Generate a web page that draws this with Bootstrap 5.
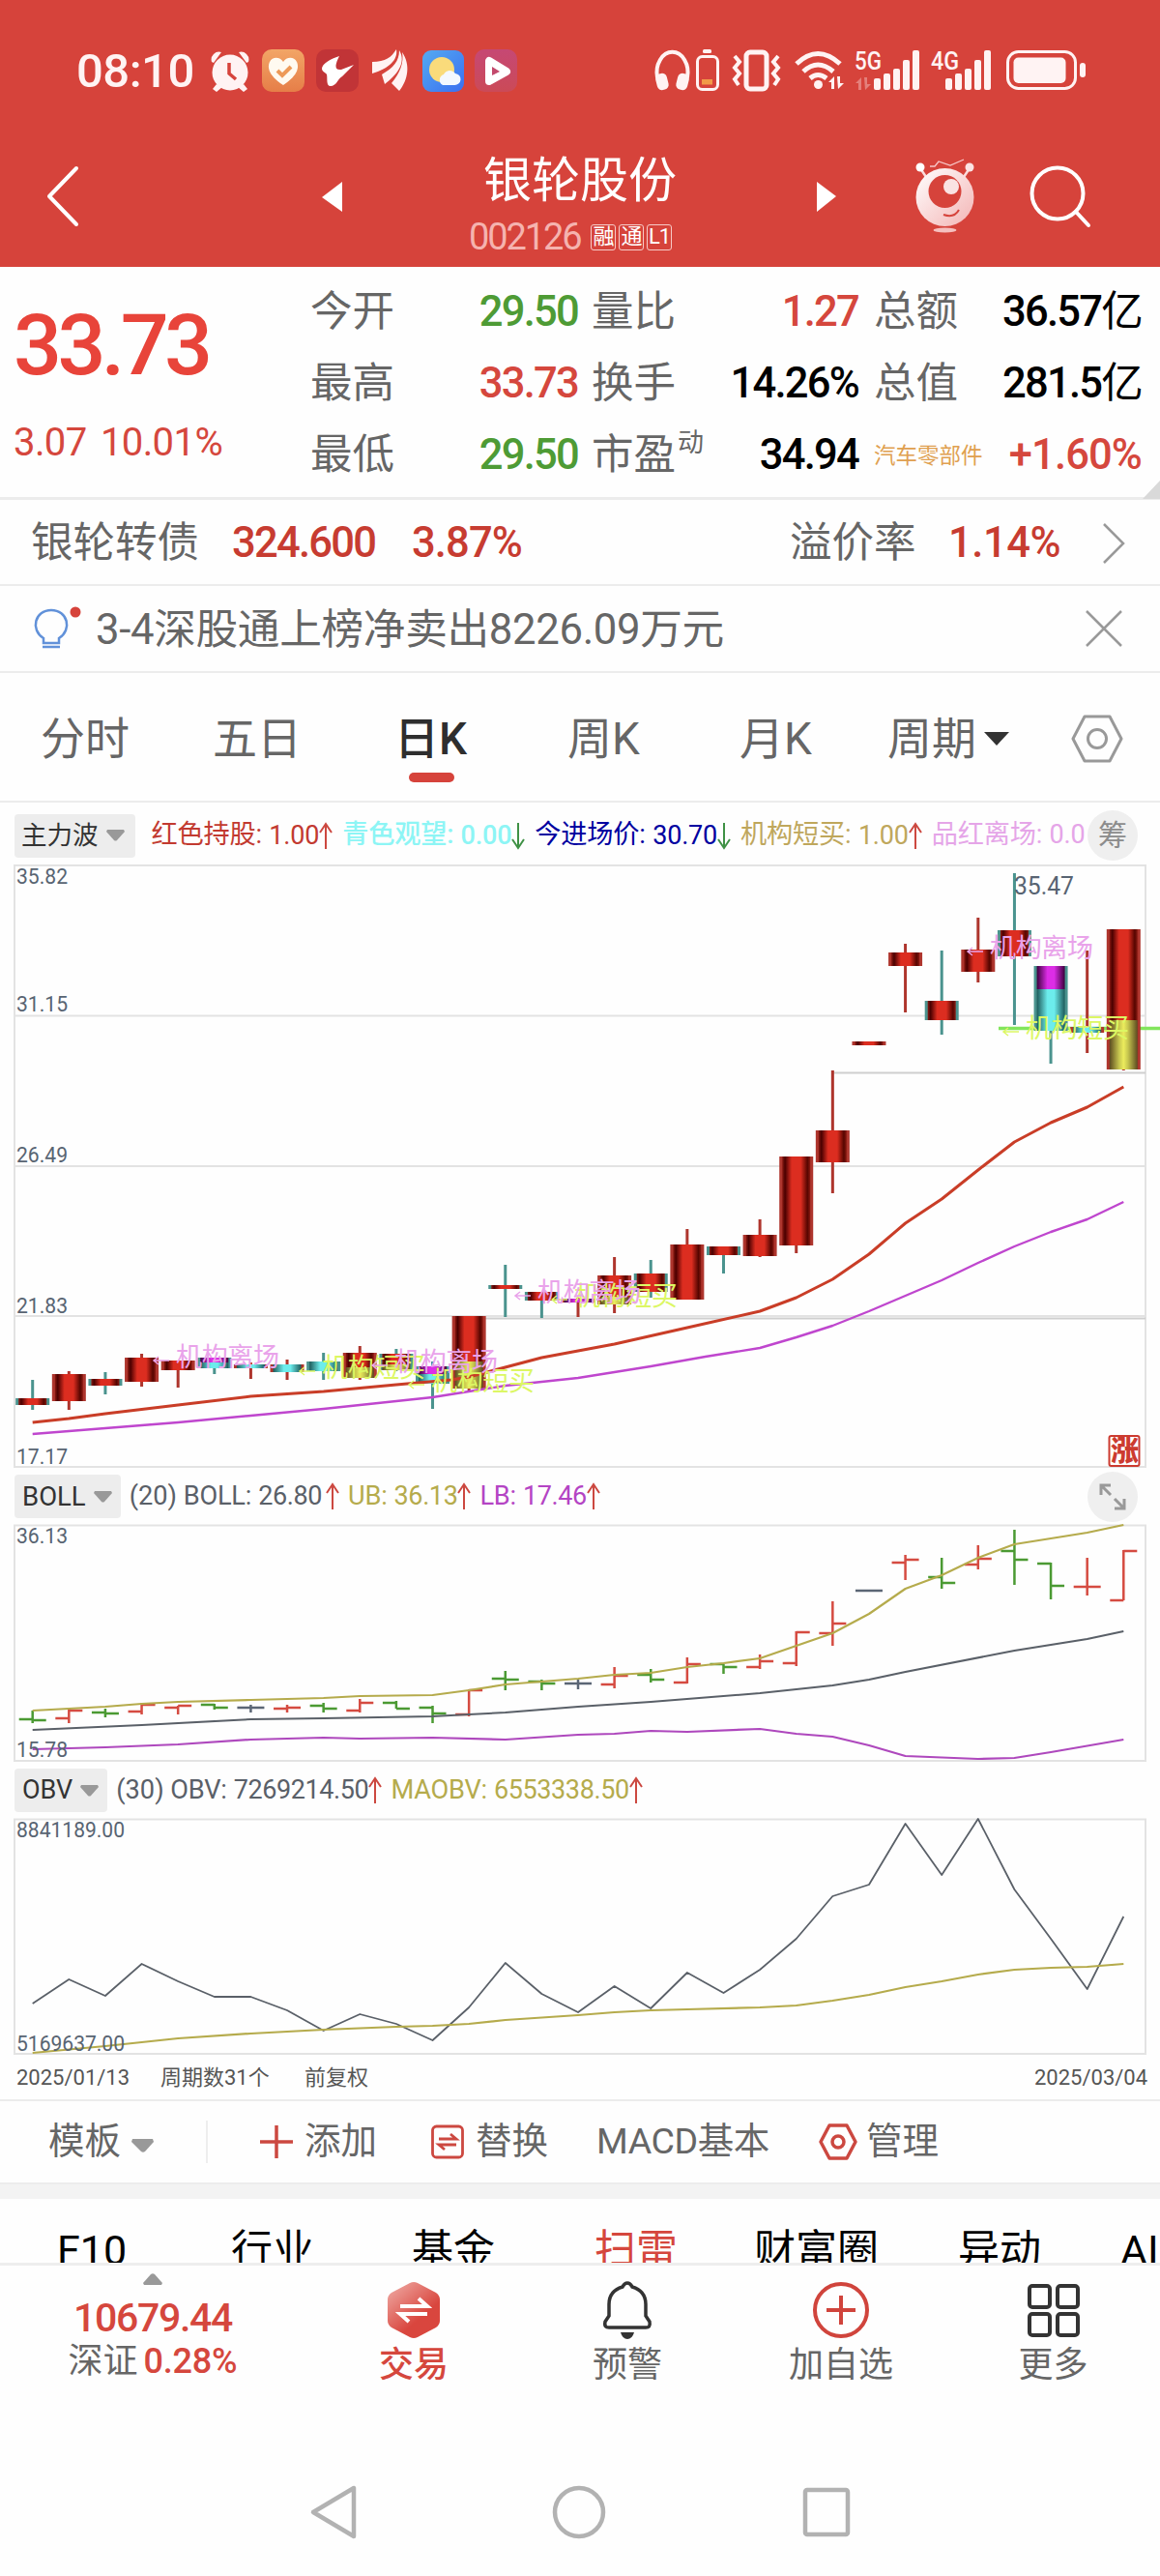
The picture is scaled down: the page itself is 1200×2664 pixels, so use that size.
<!DOCTYPE html>
<html lang="zh-CN">
<head>
<meta charset="utf-8">
<meta name="viewport" content="width=device-width, initial-scale=1">
<title>银轮股份 002126</title>
<link rel="stylesheet" href="https://cdn.jsdelivr.net/npm/bootstrap@5.3.0/dist/css/bootstrap.min.css">
<script src="https://cdn.jsdelivr.net/npm/bootstrap@5.3.0/dist/js/bootstrap.bundle.min.js"></script>
<style>
  :root{--red:#d6433b;--up:#d5473d;--down:#4e9b35;--ink:#666;--line:#ececec}
  html,body{background:#fefefe}
  body{font-family:Roboto,"Noto Sans CJK SC",sans-serif;width:1200px;height:2664px;overflow:hidden;color:var(--ink);line-height:1}
  svg{display:block;overflow:visible;flex:none}
  .n{letter-spacing:-.04em;font-weight:500;white-space:nowrap}
  .up{color:var(--up)} .down{color:var(--down)} .blk{color:#000}
  .strip{display:grid;align-items:center;white-space:nowrap}
  .topbar{background:var(--red);height:276px;color:#fff}
  .status{height:140px;padding:6px 76px 0 79px}
  .clock{font-size:49px;letter-spacing:-.5px;color:#fff3f3;margin-right:19px;font-weight:500;width:120px}
  .head{height:136px;grid-template-columns:48px 285px 152px 360px 102px 118px 1fr;padding-bottom:10px}
  .title{font-size:50px;line-height:56px;padding-left:15px}
  .codeline{margin-top:12px}
  .code{font-size:38px;color:#f5b3af;letter-spacing:-2.1px;line-height:36px;width:126px}
  .tagbox{width:26px;height:27px;border:1px solid #f7c9c6;border-radius:3px;font-size:22px;color:#fff;letter-spacing:-1px}
  .quote{height:241px;border-bottom:3px solid var(--line);display:grid;grid-template-columns:14px 307px 277px 14px 276px 16px 277px;grid-template-rows:repeat(3,74px);padding-top:10px;font-size:43.5px;align-items:center;position:relative;white-space:nowrap}
  .lastpx{grid-area:1/2/4/3;align-self:start;color:#e8443a}
  .lastpx .big{font-size:88px;letter-spacing:-4.6px;line-height:88px;margin-top:27px;font-weight:500}
  .lastpx .chg{font-size:40px;color:var(--up);margin-top:37px;word-spacing:5px;letter-spacing:-.6px;font-weight:400}
  .g1{grid-column:3}.g2{grid-column:5}.g3{grid-column:7}
  .sup{font-size:27px;position:relative;top:-18px;margin-left:2px}
  .sector{font-size:22.5px;color:#e0a050}
  .corner{position:absolute;right:0;bottom:-2px}
  .bond{height:89px;border-bottom:2px solid var(--line);grid-template-columns:32px 208px 186px 391px 164px 160px 1fr;font-size:43.5px;padding-top:2px}
  .bond .up{color:#c73c31}
  .news{height:90px;border-bottom:2px solid var(--line);grid-template-columns:35px 64px 1024px 1fr;font-size:43.7px}
  .news span{padding-top:4px;letter-spacing:-.35px}
  .period{height:134px;border-bottom:2px solid #ececec;grid-template-columns:42px 178px 188px 179px 178px 153px 100px 90px 1fr;font-size:46px;padding-top:4px}
  .period .on{color:#2e2e2e;font-weight:500;position:relative}
  .on i{position:absolute;left:15px;top:58px;width:47px;height:10px;border-radius:5px;background:var(--red)}
  .legend{height:64px;padding:4px 0 0 15px;font-size:27.2px}
  .legend.low{height:59px;padding-top:0}
  .pick{background:#ededed;border-radius:4px;height:45px;color:#333;padding:0 11px 0 7px;gap:8px;margin-right:17px;font-size:26.5px}
  .pick.en{font-size:27.5px;padding:0 9px 0 8px;margin-right:9px}
  .pick.obv{font-size:27px}
  .per{width:56px;color:#5a6068}
  .legend .it{margin-right:10px;white-space:nowrap;letter-spacing:-.2px}
  .legend .num{font-size:27px;letter-spacing:-.2px;margin-left:7.5px}
  .low .it{margin-right:9px}
  .low .num{letter-spacing:-.4px;margin-left:7px}
  .dot{width:52px;height:52px;border-radius:50%;background:#efefef;color:#8c8c8c;font-size:30px}
  .dates{height:46px;font-size:22px;grid-template-columns:17px 149px 149px 755px 1fr;color:#555;padding-top:2px}
  .tools{height:86px;border-top:2px solid var(--line);grid-template-columns:50px 86px 77px 56px 46px 131px 46px 125px 230px 49px 1fr;font-size:37.5px}
  .band{height:17px;background:#f3f3f3;border-top:2px solid #ececec}
  .more{height:66px;overflow:hidden;grid-template-columns:59px 180px 187px 189px 165px 211px 168px 1fr;font-size:43px;color:#000;align-items:start;padding-top:32px}
  .dock{height:140px;border-top:3px solid #eee;grid-template-columns:316px 224px 218px 224px 217px;align-items:start;font-size:36px}
  .dock .cell{display:flex;flex-direction:column;align-items:center;padding-top:16px}
  .dock .cell svg{height:60px;margin-bottom:9px}
  .keys{height:150px}
  text{font-family:Roboto,"Noto Sans CJK SC",sans-serif}
</style>
</head>
<body>
<header class="topbar">
  <div class="status d-flex align-items-center">
    <span class="clock">08:10</span>
    <div class="d-flex align-items-center flex-grow-1">
      <svg width="40" height="44" viewBox="0 0 40 44"><g fill="#fff3f3"><circle cx="20" cy="24" r="18.5"/><path d="M1 13A8 8 0 0 1 11 3L3 14zM39 13A8 8 0 0 0 29 3l8 11z"/><path d="M6 36l-4 5 4 3 6-5zM34 36l4 5-4 3-6-5z"/></g><path d="M19 14v11l7 6" fill="none" stroke="#d6433b" stroke-width="3.5"/></svg>
      <svg style="margin-left:13px" width="44" height="44" viewBox="0 0 44 44"><defs><linearGradient id="ho" x2="0" y2="1"><stop stop-color="#f2a566"/><stop offset="1" stop-color="#e67e48"/></linearGradient></defs><rect width="44" height="44" rx="10" fill="url(#ho)"/><path d="M22 37C5 26 6 17 8 13c3-6 11-5 14 0 3-5 11-6 14 0 2 4 3 13-14 24z" fill="#fffaf0"/><path d="M16 22l5 5 9-9" fill="none" stroke="#ed9a58" stroke-width="4"/></svg>
      <svg class="ms-2" width="48" height="44" viewBox="-4 0 48 44"><rect width="44" height="44" rx="10" fill="#c13437"/><path d="M24 7c-9 3-18 8-18 13 0 3 4 4 5 6 1 4-1 12 4 12 6 0 7-7 12-10L39 16 26 21c-8 1-6-6-2-14z" fill="#fff"/></svg>
      <svg style="margin-left:13px" width="40" height="44" viewBox="0 0 40 44"><g fill="#fff3f3"><path d="M1 13c14 0 20-5 25-13 2 11-8 20-25 25z"/><path d="M11 26C23 19 29 12 29 1c8 13-3 26-15 35z"/><path d="M21 35C30 24 34 14 32 3c9 13 6 29-3 40z"/></g></svg>
      <svg style="margin-left:13px" width="43" height="44" viewBox="0 0 43 44"><defs><linearGradient id="wb" x2="1" y2="1"><stop stop-color="#54aaf2"/><stop offset="1" stop-color="#3b6ff0"/></linearGradient></defs><rect y="1" width="43" height="43" rx="9" fill="url(#wb)"/><circle cx="20" cy="21" r="13" fill="#fadb7b"/><path d="M21 37a6 6 0 0 1 1-11 7 7 0 0 1 12-1 6 6 0 0 1-1 12z" fill="#f4f8ff"/></svg>
      <svg style="margin-left:11px" width="44" height="44" viewBox="0 0 44 44"><defs><linearGradient id="pp" x2="0" y2="1"><stop stop-color="#c64874"/><stop offset="1" stop-color="#cb4a57"/></linearGradient></defs><rect width="44" height="44" rx="10" fill="url(#pp)"/><path d="M15 12v21l18-10z" fill="none" stroke="#fff" stroke-width="8" stroke-linejoin="round"/><path d="M18 18v9l8-4z" fill="#c34a6d"/></svg>
    </div>
    <svg width="447" height="44" viewBox="677 52 447 44" fill="#fff3f3">
      <path d="M680 81a16 21 0 1 1 31 0" fill="none" stroke="#fff3f3" stroke-width="4"/><rect x="679" y="77" width="12" height="17" rx="5" transform="rotate(-14 685 86)"/><rect x="700" y="77" width="12" height="17" rx="5" transform="rotate(14 706 86)"/>
      <rect x="727" y="52" width="9" height="4" rx="1.5"/><rect x="721.5" y="59.500" width="21" height="34" rx="5" fill="none" stroke="#fff3f3" stroke-width="3"/><rect x="726" y="83" width="11" height="5.500" fill="#f19a48"/>
      <rect x="772" y="55" width="21" height="38" rx="4" fill="none" stroke="#fff3f3" stroke-width="5"/><path d="M760 59l5 6-5 6 5 6-5 6 4 6M805 59l-5 6 5 6-5 6 5 6-4 6" fill="none" stroke="#fff3f3" stroke-width="4"/>
      <g fill="none" stroke="#fff3f3" stroke-width="5"><path d="M824 67q22-21 45 0"/><path d="M831 75q15-14 31 0"/><path d="M838 82q8-7 17 0"/></g><circle cx="846.500" cy="88.500" r="4.500"/><path d="M857 86l6-6v13h-3v-7zM866 80h3v7h4l-6 6z"/>
      <text x="884" y="73" font-size="26" font-weight="500" textLength="28" lengthAdjust="spacingAndGlyphs">5G</text>
      <path d="M885 87l6-6v13h-3v-7zM894 81h3v7h4l-6 6z" opacity=".35"/>
      <g id="sig"><rect x="904" y="82" width="7" height="12" rx="2"/><rect x="914" y="77" width="7" height="17" rx="2"/><rect x="924" y="72" width="7" height="22" rx="2"/><rect x="934" y="63" width="7" height="31" rx="2"/><rect x="944" y="53" width="7" height="41" rx="2"/></g>
      <text x="963" y="73" font-size="26" font-weight="500" textLength="29" lengthAdjust="spacingAndGlyphs">4G</text>
      <use href="#sig" x="74"/>
      <rect x="1042.500" y="54.500" width="70" height="38" rx="11" fill="none" stroke="#fff3f3" stroke-width="3"/><rect x="1048.500" y="60.500" width="54" height="26.500" rx="5"/><rect x="1117" y="66" width="6" height="15" rx="3"/>
    </svg>
  </div>
  <nav class="head strip">
    <span></span>
    <svg width="34" height="62" viewBox="0 0 34 62"><path d="M31 2L3 31l28 29" fill="none" stroke="#fff" stroke-width="4" stroke-linecap="round" stroke-linejoin="round"/></svg>
    <svg width="21" height="31" viewBox="0 0 21 31"><path d="M21 0v31L0 16z" fill="#fff"/></svg>
    <div class="pt-3">
      <div class="title">银轮股份</div>
      <div class="codeline d-flex align-items-center"><span class="code">002126</span><span class="d-flex" style="gap:3px"><span class="tagbox d-flex align-items-center justify-content-center">融</span><span class="tagbox d-flex align-items-center justify-content-center">通</span><span class="tagbox d-flex align-items-center justify-content-center">L1</span></span></div>
    </div>
    <svg width="21" height="31" viewBox="0 0 21 31"><path d="M0 0v31l20-16z" fill="#fff"/></svg>
    <svg width="62" height="76" viewBox="0 0 62 76"><defs><linearGradient id="rb" x2="1" y2="1"><stop stop-color="#fff"/><stop offset="1" stop-color="#f3b4b4"/></linearGradient></defs><path d="M5 9l8 12M56 9l-8 12" stroke="#fbdcdc" stroke-width="2.500"/><path d="M15 7h5l4-5 12 4L50 0" fill="none" stroke="#f8c8c8" stroke-width="1.300"/><circle cx="5" cy="8" r="4.500" fill="#fff"/><circle cx="56" cy="8" r="4.500" fill="#fbe4e4"/><circle cx="30.500" cy="39" r="30" fill="url(#rb)"/><circle cx="30.500" cy="33" r="17" fill="#d6433b"/><circle cx="37" cy="28" r="8" fill="#fae3e3"/><path d="M29 57q11 4 16-5" fill="none" stroke="#d6433b" stroke-width="2"/><ellipse cx="30.500" cy="73" rx="12" ry="2.500" fill="#f5c0bf"/></svg>
    <svg width="64" height="64" viewBox="0 0 64 64" fill="none" stroke="#fff" stroke-width="4" stroke-linecap="round"><circle cx="29" cy="29" r="26.500"/><path d="M48 48l13 14"/></svg>
  </nav>
</header>

<section class="quote">
  <div class="lastpx"><div class="big">33.73</div><div class="chg">3.07 10.01%</div></div>
  <div class="g1 d-flex justify-content-between"><span>今开</span><span class="n down">29.50</span></div>
  <div class="g2 d-flex justify-content-between"><span>量比</span><span class="n up">1.27</span></div>
  <div class="g3 d-flex justify-content-between"><span>总额</span><span class="n blk">36.57<span class="fw-normal">亿</span></span></div>
  <div class="g1 d-flex justify-content-between"><span>最高</span><span class="n up">33.73</span></div>
  <div class="g2 d-flex justify-content-between"><span>换手</span><span class="n blk">14.26%</span></div>
  <div class="g3 d-flex justify-content-between"><span>总值</span><span class="n blk">281.5<span class="fw-normal">亿</span></span></div>
  <div class="g1 d-flex justify-content-between"><span>最低</span><span class="n down">29.50</span></div>
  <div class="g2 d-flex justify-content-between"><span>市盈<span class="sup">动</span></span><span class="n blk">34.94</span></div>
  <div class="g3 d-flex justify-content-between align-items-center"><span class="sector">汽车零部件</span><span class="n up" style="letter-spacing:-.02em">+1.60%</span></div>
  <svg class="corner" width="18" height="19"><path d="M18 0v19H0z" fill="#d9d9d9"/></svg>
</section>

<section class="bond strip">
  <span></span><span>银轮转债</span><span class="n up">324.600</span><span class="n up" style="letter-spacing:-.02em">3.87%</span><span>溢价率</span><span class="n up" style="letter-spacing:-.01em">1.14%</span>
  <svg width="22" height="42" viewBox="0 0 22 42"><path d="M1 1l20 20L1 41" fill="none" stroke="#999" stroke-width="2.500"/></svg>
</section>
<section class="news strip">
  <i></i>
  <svg width="50" height="46" viewBox="0 0 50 46" fill="none" stroke="#6191d9" stroke-width="2.500"><path d="M10 38v-5C-4 24 1 4 18 4s22 20 8 29v5zM9 42h18"/><circle cx="43" cy="6" r="5.500" fill="#d6433b" stroke="none"/></svg>
  <span>3-4深股通上榜净卖出8226.09万元</span>
  <svg width="38" height="38" viewBox="0 0 38 38"><path d="M1 1l36 36M37 1L1 37" stroke="#999" stroke-width="2.500"/></svg>
</section>
<nav class="period strip">
  <span></span><span>分时</span><span>五日</span><span class="on">日K<i></i></span><span>周K</span><span>月K</span><span>周期</span>
  <svg width="26" height="14"><path d="M0 0h26L13 14z" fill="#333"/></svg>
  <svg width="54" height="50" viewBox="0 0 54 50" fill="none" stroke="#999" stroke-width="3"><path d="M14 2h26l12 23-12 23H14L2 25z" stroke-linejoin="round"/><circle cx="27" cy="25" r="9.500"/></svg>
</nav>

<section>
  <div class="legend d-flex align-items-center">
    <div class="pick d-flex align-items-center">主力波<svg width="19" height="12"><path d="M1 0h17l1 2-8 9q-1.500 1-3 0L0 2z" fill="#999"/></svg></div>
    <span class="it d-flex align-items-center" style="color:#c23a30">红色持股:<span class="num">1.00</span><svg width="14" height="29" viewBox="0 0 14 29"><use href="#arr"/></svg></span>
    <span class="it d-flex align-items-center fw-medium" style="color:#8df5f5">青色观望:<span class="num">0.00</span><svg width="14" height="29" viewBox="0 0 14 29"><use href="#ard"/></svg></span>
    <span class="it d-flex align-items-center" style="color:#0000a0">今进场价:<span class="num">30.70</span><svg width="14" height="29" viewBox="0 0 14 29"><use href="#ard"/></svg></span>
    <span class="it d-flex align-items-center" style="color:#bfa75c">机构短买:<span class="num">1.00</span><svg width="14" height="29" viewBox="0 0 14 29"><use href="#arr"/></svg></span>
    <span class="it d-flex align-items-center me-0" style="color:#e5a5e8">品红离场:<span class="num">0.0</span></span>
    <span class="dot d-flex align-items-center justify-content-center ms-auto" style="margin-right:23px">筹</span>
  </div>
  <svg id="kline" width="1200" height="624" viewBox="0 894 1200 624">
    <defs>
      <g id="arr" fill="none" stroke="#cc4840" stroke-width="2"><path d="M7 28V2M1 11l6-9 6 9"/></g>
      <g id="ard" fill="none" stroke="#3f9145" stroke-width="2"><path d="M7 1v26M1 18l6 9 6-9"/></g>
      <linearGradient id="gr"><stop stop-color="#8a1a12"/><stop offset=".1" stop-color="#4a0000"/><stop offset=".34" stop-color="#dc2d20"/><stop offset=".66" stop-color="#dc2d20"/><stop offset=".9" stop-color="#560500"/><stop offset="1" stop-color="#8a1a12"/></linearGradient>
      <linearGradient id="gc"><stop stop-color="#1d5a5a"/><stop offset=".38" stop-color="#6cecec"/><stop offset=".62" stop-color="#6cecec"/><stop offset="1" stop-color="#1d5a5a"/></linearGradient>
      <linearGradient id="gm"><stop stop-color="#3c003c"/><stop offset=".38" stop-color="#dc2de6"/><stop offset=".62" stop-color="#dc2de6"/><stop offset="1" stop-color="#3c003c"/></linearGradient>
      <linearGradient id="gy"><stop stop-color="#5c4a20"/><stop offset=".35" stop-color="#c8c850"/><stop offset=".5" stop-color="#ecec5c"/><stop offset=".65" stop-color="#c8c850"/><stop offset="1" stop-color="#5c4a20"/></linearGradient>
    </defs>
    <g fill="none" stroke="#e3e3e3" stroke-width="2"><path d="M15 895H1185V1517H15zM15 1050.500H1185M15 1206H1185M15 1361H1185"/><path d="M862 1109.500H1185M488 1363.500H1185" stroke="#cfcfcf"/></g>
    <path d="M1033 1063.500H1200" stroke="#82e55c" stroke-width="3.500"/>
  </svg>
</section>

<section>
  <div class="legend low d-flex align-items-center">
    <div class="pick en d-flex align-items-center">BOLL<svg width="19" height="12"><path d="M1 0h17l1 2-8 9q-1.500 1-3 0L0 2z" fill="#999"/></svg></div>
    <span class="per">(20)</span>
    <span class="it d-flex align-items-center" style="color:#5a6068">BOLL:<span class="num">26.80</span><svg class="ms-1" width="14" height="29" viewBox="0 0 14 29"><use href="#arr"/></svg></span>
    <span class="it d-flex align-items-center" style="color:#b5ab4c">UB:<span class="num">36.13</span><svg width="14" height="29" viewBox="0 0 14 29"><use href="#arr"/></svg></span>
    <span class="it d-flex align-items-center" style="color:#b444c4">LB:<span class="num">17.46</span><svg width="14" height="29" viewBox="0 0 14 29"><use href="#arr"/></svg></span>
    <span class="dot d-flex align-items-center justify-content-center ms-auto" style="margin-right:23px"><svg width="28" height="28" viewBox="0 0 28 28" fill="none" stroke="#999" stroke-width="3"><path d="M12 12L2.500 2.500M2 12V2h10M16 16l9.500 9.500M26 16v10H16"/></svg></span>
  </div>
  <svg id="boll" width="1200" height="245" viewBox="0 1577 1200 245"><path d="M15 1577.500H1185V1821H15z" fill="none" stroke="#e3e3e3" stroke-width="2"/></svg>
</section>

<section>
  <div class="legend low d-flex align-items-center">
    <div class="pick en obv d-flex align-items-center">OBV<svg width="19" height="12"><path d="M1 0h17l1 2-8 9q-1.500 1-3 0L0 2z" fill="#999"/></svg></div>
    <span class="per">(30)</span>
    <span class="it d-flex align-items-center" style="color:#5a6068">OBV:<span class="num">7269214.50</span><svg width="14" height="29" viewBox="0 0 14 29"><use href="#arr"/></svg></span>
    <span class="it d-flex align-items-center" style="color:#b5ab4c">MAOBV:<span class="num">6553338.50</span><svg width="14" height="29" viewBox="0 0 14 29"><use href="#arr"/></svg></span>
  </div>
  <svg id="obv" width="1200" height="244" viewBox="0 1881 1200 244"><path d="M15 1881.500H1185V2124H15z" fill="none" stroke="#e3e3e3" stroke-width="2"/></svg>
  <div class="dates strip"><span></span><span>2025/01/13</span><span>周期数31个</span><span>前复权</span><span>2025/03/04</span></div>
</section>

<nav class="tools strip">
  <span></span><span>模板</span><svg style="margin-top:7px" width="23" height="14"><path d="M1 0h21l1 3-9 10q-2 1.500-4 0L0 3z" fill="#999"/></svg>
  <svg width="56" height="44"><path d="M1 0v44" stroke="#eee" stroke-width="2"/></svg>
  <svg width="34" height="34"><path d="M17 0v34M0 17h34" stroke="#cc4840" stroke-width="3.500"/></svg><span>添加</span>
  <svg width="34" height="36" viewBox="0 0 34 36" fill="none" stroke="#cc4840" stroke-width="2.800"><rect x="1.500" y="2" width="31" height="32" rx="4"/><path d="M8 15h18l-6-5M26 21H8l6 5"/></svg><span>替换</span><span style="letter-spacing:-.4px">MACD基本</span>
  <svg width="40" height="38" viewBox="0 0 40 38" fill="none" stroke="#cc4840" stroke-width="3.500"><path d="M11 2h18l9 17-9 17H11L2 19z" stroke-linejoin="round"/><circle cx="20" cy="19" r="6"/></svg><span>管理</span>
</nav>
<div class="band"></div>
<nav class="more strip"><span></span><span>F10</span><span>行业</span><span>基金</span><span class="up">扫雷</span><span>财富圈</span><span>异动</span><span>AI</span></nav>

<footer>
  <div class="dock strip">
    <div class="cell" style="padding-top:8px"><svg style="height:12px;margin-bottom:14px" width="22" height="12"><path d="M9 1q2-1.500 4 0l8 9-1 2H2l-1-2z" fill="#999"/></svg><span class="n up" style="font-size:41px;line-height:41px;letter-spacing:-1.300px">10679.44</span><span style="margin-top:6px">深证 <span class="n up" style="margin-left:-3px;letter-spacing:-.2px">0.28%</span></span></div>
    <div class="cell up"><svg width="54" viewBox="0 0 54 60"><defs><linearGradient id="hx" x2=".8" y2="1"><stop stop-color="#f0b0aa"/><stop offset=".7" stop-color="#d9463e"/></linearGradient></defs><path d="M23 2q4-2 8 0l19 10q4 3 4 7v22q0 4-4 7L31 58q-4 2-8 0L4 48q-4-3-4-7V19q0-4 4-7z" fill="url(#hx)"/><path d="M13 26h28l-9-8M41 34H13l9 8" fill="none" stroke="#fff" stroke-width="4"/></svg><span class="fw-medium">交易</span></div>
    <div class="cell"><svg width="50" viewBox="0 0 50 60"><path d="M25 2c3 0 4 2 5 4 10 3 14 10 14 18v12l4 6c1 5-1 6-4 6H6c-3 0-5-1-4-6l4-6V24C6 16 10 9 20 6c1-2 2-4 5-4z" fill="none" stroke="#333" stroke-width="3.500"/><path d="M18 53h14q-2 7-7 7t-7-7z" fill="#333"/></svg><span>预警</span></div>
    <div class="cell"><svg width="58" viewBox="0 0 58 60" fill="none" stroke="#d0443c" stroke-width="4"><circle cx="29" cy="30" r="27"/><path d="M29 15v30M14 30h30"/></svg><span>加自选</span></div>
    <div class="cell" style="margin-left:-2px"><svg width="54" viewBox="0 0 54 60" fill="none" stroke="#333" stroke-width="4"><rect x="2" y="5" width="21" height="22" rx="3"/><rect x="31" y="5" width="21" height="22" rx="3"/><rect x="2" y="34" width="21" height="22" rx="3"/><rect x="31" y="34" width="21" height="22" rx="3"/></svg><span>更多</span></div>
  </div>
  <div class="keys d-flex justify-content-center align-items-end">
    <svg class="mb-1" width="560" height="56" viewBox="320 2571 560 56" fill="none" stroke="#b2b2b2" stroke-width="4.500"><path d="M366 2574v50l-42-25z" stroke-linejoin="round"/><circle cx="599" cy="2599" r="25"/><rect x="833" y="2576" width="44" height="46" rx="2"/></svg>
  </div>
</footer>

<script>
const NS='http://www.w3.org/2000/svg', X=i=>33.7+37.62*i;
const WICK={r:'#ae352d',g:'#4a938e'};
function el(svg,tag,at,txt){const e=document.createElementNS(NS,tag);for(const k in at)e.setAttribute(k,at[k]);if(txt)e.textContent=txt;svg.appendChild(e);return e}
function line(svg,pts,c,w){el(svg,'polyline',{points:pts.map(p=>X(p[0]).toFixed(1)+','+p[1]).join(' '),fill:'none',stroke:c,'stroke-width':w,'stroke-linejoin':'round'})}
function label(svg,x,y,t,len,size=22){el(svg,'text',{x,y,'font-size':size,fill:'#586472',textLength:len,lengthAdjust:'spacingAndGlyphs'},t)}
const every=a=>a.map((y,i)=>[i,y]);

/* daily candles: wick top, wick bottom, tint, body segments [fill, top, bottom] */
const K=[
[1427,1458,'g',['gr',1446,1453]],[1418,1458,'r',['gr',1421,1449]],[1419,1442,'g',['gr',1426,1433]],[1400,1434,'r',['gr',1404,1429]],
[1407,1435,'r',['gr',1407,1417]],[1404,1421,'g',['gm',1404,1409],['gc',1409,1415]],[1409,1426,'r',['gc',1411,1415]],[1406,1427,'r',['gc',1411,1419]],
[1399,1427,'g',['gc',1408,1418]],[1392,1427,'r',['gr',1399,1414],['gy',1414,1425]],[1395,1418,'g',['gr',1400,1411],['gy',1411,1417]],
[1408,1457,'g',['gm',1413,1421],['gc',1421,1431]],[1361,1438,'r',['gr',1361,1408],['gy',1408,1436]],[1308,1362,'g',['gr',1329,1333]],
[1336,1363,'g',['gr',1336,1345]],[1342,1362,'r',['gm',1343,1347]],[1300,1358,'r',['gr',1319,1341],['gy',1341,1349]],[1303,1342,'g',['gr',1317,1336]],
[1271,1344,'r',['gr',1287,1344]],[1289,1317,'g',['gr',1289,1298]],[1261,1300,'r',['gr',1277,1299]],[1196,1296,'r',['gr',1196,1288]],
[1107,1234,'r',['gr',1169,1202]],[1077,1081,'r',['gr',1077,1081]],[976,1047,'r',['gr',985,999]],[983,1070,'g',['gr',1035,1055]],
[949,1016,'r',['gr',982,1005]],[903,1060,'g',['gr',962,989]],[999,1100,'g',['gm',999,1023],['gc',1023,1066]],[983,1089,'r',['gc',1062,1068]],
[961,1107,'r',['gr',961,1055],['gy',1055,1106]]];
const k=document.getElementById('kline');
K.forEach(([h,l,c,...b],i)=>{
  const x=X(i),t=b[0][1],m=b[b.length-1][2];
  el(k,'rect',{x:x-1.500,y:h,width:3,height:l-h,fill:WICK[c]});
  el(k,'rect',{x:x-17.5,y:t,width:35,height:m-t,fill:WICK[c]});
  b.forEach(([f,a,z])=>el(k,'rect',{x:x-14.5,y:a,width:29,height:z-a,fill:`url(#${f})`}));
});
line(k,[[0,1471],[1,1467],[2,1462],[4,1453],[6,1444],[8,1439],[10,1432],[11.5,1427],[12,1424],[14,1404],[16,1390],[18,1373],[20,1356],[21,1342],[22,1323],[23,1297],[24,1265],[25,1240],[26,1210],[27,1181],[28,1161],[29,1145],[30,1124]],'#c93d27',3);
line(k,[[0,1483],[2,1477],[4,1471],[6,1464],[8,1457],[10,1449],[11,1445],[13,1433],[15,1425],[17,1413],[18.5,1403],[20,1394],[21,1383],[22,1371],[23,1356],[24,1340],[25,1324],[26,1306],[27,1289],[28,1274],[29,1261],[30,1243]],'#bf46ce',2.4);
[[333,1424,'机构短买','#dcf764'],[182,1413,'机构离场','#e9a3ea'],[446,1438,'机构短买','#dcf764'],[408,1418,'机构离场','#e9a3ea'],[594,1350,'机构短买','#dcf764'],[556,1346,'机构离场','#e9a3ea'],[1024,990,'机构离场','#e9a3ea'],[1061,1073,'机构短买','#dcf764']]
.forEach(([x,y,t,c])=>{el(k,'text',{x,y,'font-size':27,fill:c,textLength:107},t);el(k,'path',{d:`M${x-7} ${y-6}h-16m5-4l-5 4l5 4`,fill:'none',stroke:c,'stroke-width':1.5})});
label(k,1049,925,'35.47',62,25.5);
[[914,'35.82'],[1046,'31.15'],[1202,'26.49'],[1358,'21.83'],[1514,'17.17']].forEach(([y,t])=>label(k,17,y,t,53));
el(k,'rect',{x:1147.5,y:1485,width:31,height:31,rx:2,fill:'#fff',stroke:'#cc3b30','stroke-width':2});
el(k,'text',{x:1149,y:1511,'font-size':29,'font-weight':900,fill:'#cc3b30'},'涨');

/* American bars: high, low, open, close, colour */
const R='#d54b41',G='#4b9a33',D='#5b6675';
const B=[[1769,1782,1778,1779,G],[1767,1782,1777,1769,R],[1767,1776,1771,1772,G],[1761,1773,1770,1763,R],[1764,1773,1766,1764,R],[1762,1768,1763,1766,G],[1763,1771,1766,1766,D],[1763,1771,1767,1766,R],[1761,1771,1764,1767,G],[1757,1771,1769,1761,R],[1759,1767,1761,1767,G],[1764,1782,1766,1772,G],[1747,1775,1773,1748,R],[1728,1748,1736,1737,G],[1737,1748,1739,1741,G],[1737,1747,1741,1741,D],[1724,1746,1742,1733,R],[1726,1740,1732,1737,G],[1714,1741,1740,1721,R],[1721,1731,1721,1724,G],[1711,1726,1724,1718,R],[1687,1723,1720,1688,R],[1656,1702,1689,1679,R],[1644,1646,1645,1645,D],[1608,1634,1616,1613,R],[1611,1643,1631,1637,G],[1598,1623,1618,1612,R],[1582,1639,1604,1613,G],[1616,1654,1617,1640,G],[1611,1650,1641,1641,R],[1603,1655,1655,1604,R]];
const b=document.getElementById('boll');
B.forEach(([h,l,o,c,col],i)=>{const x=X(i);el(b,'path',{d:`M${x} ${h}V${l}M${x-14} ${o}H${x}M${x} ${c}H${x+14}`,stroke:col,'stroke-width':2.5})});
line(b,[[0,1769],[1,1767],[2,1765],[3,1762],[4,1760],[6,1758],[8,1756],[9,1754],[11,1753],[12,1748],[13,1742],[14,1739],[15,1736],[16,1732],[17,1730],[18,1724],[19,1720],[20,1715],[21,1702],[22,1689],[23,1669],[24,1643],[25,1629],[26,1611],[27,1597],[28,1591],[29,1585],[30,1577]],'#b5ab4c',2.2);
line(b,[[0,1789],[3,1784],[6,1778],[8,1777],[11,1775],[12,1773],[13,1771],[15,1765],[17,1760],[20,1751],[22,1743],[23,1737],[24,1729],[27,1707],[29,1695],[30,1687]],'#5a6068',2);
line(b,[[0,1809],[2,1807],[4,1804],[6,1799],[8,1797],[9,1798],[11,1797],[13,1799],[15,1794],[16,1793],[17,1790],[18,1791],[20,1788],[21,1793],[22,1796],[23,1805],[24,1816],[26,1819],[27,1818],[28,1812],[30,1799]],'#ae48bd',2.2);
label(b,17,1596,'36.13',53);label(b,17,1817,'15.78',53);

const v=document.getElementById('obv');
line(v,every([2072,2047,2064,2031,2049,2065,2065,2079,2100,2083,2093,2110,2076,2030,2062,2081,2054,2077,2040,2061,2037,2005,1961,1949,1886,1939,1881,1954,2005,2057,1982]),'#5a6068',1.8);
line(v,[[0,2123],[2,2116],[4,2108],[6,2103],[8,2099],[10,2096],[11,2095],[12,2093],[13,2089],[15,2084],[16,2081],[17,2079],[18,2078],[20,2076],[21,2074],[22,2069],[23,2063],[24,2055],[25,2049],[26,2042],[27,2037],[28,2035],[29,2034],[30,2031]],'#b5ab4c',2.2);
label(v,17,1900,'8841189.00',112);label(v,17,2121,'5169637.00',112);
</script>
</body>
</html>
